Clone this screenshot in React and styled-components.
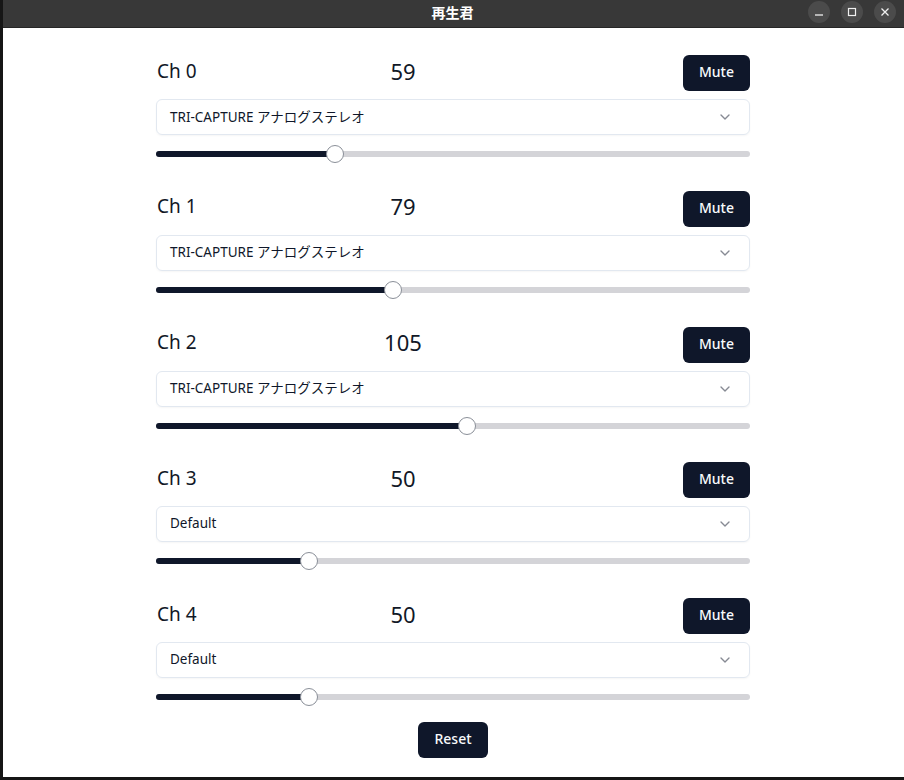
import React, { useState } from 'react'
import styled, { createGlobalStyle } from 'styled-components'
import { ChevronDown } from 'lucide-react'

const GlobalStyle = createGlobalStyle`
  html, body {
    margin: 0;
    padding: 0;
    background: #161616;
    font-family: 'Noto Sans', 'Noto Sans CJK JP', sans-serif;
  }
  * { box-sizing: border-box; }
`

const MAX = 200

const channels = [
  { name: 'Ch 0', value: 59, device: 'TRI-CAPTURE アナログステレオ' },
  { name: 'Ch 1', value: 79, device: 'TRI-CAPTURE アナログステレオ' },
  { name: 'Ch 2', value: 105, device: 'TRI-CAPTURE アナログステレオ' },
  { name: 'Ch 3', value: 50, device: 'Default' },
  { name: 'Ch 4', value: 50, device: 'Default' },
]

const Window = styled.div`
  margin-left: 3px;
  width: 901px;
  height: 777px;
  display: flex;
  flex-direction: column;
`

const TitleBar = styled.div`
  height: 28px;
  background: #383838;
  border-bottom: 1px solid #262626;
  display: flex;
  align-items: center;
  justify-content: center;
  position: relative;
`

const Title = styled.div`
  color: #ffffff;
  font-family: 'Noto Sans CJK JP', sans-serif;
  font-weight: 700;
  font-size: 14px;
  margin-left: -2px;
  margin-top: -3px;
`

const Controls = styled.div`
  position: absolute;
  right: 8px;
  top: -2px;
  height: 100%;
  display: flex;
  align-items: center;
  gap: 11px;
`

const CtlButton = styled.div`
  width: 22px;
  height: 22px;
  border-radius: 50%;
  background: #4b4b4b;
  display: flex;
  align-items: center;
  justify-content: center;
  color: #f0f0f0;
`

const Content = styled.div`
  flex: 1;
  background: #ffffff;
  margin-right: -3px;
  border-right: 3px solid #161616;
  padding: 27px 0 0 153px;
`

const Column = styled.div`
  width: 594px;
  display: flex;
  flex-direction: column;
  gap: 26.75px;
`

const Section = styled.div`
  display: flex;
  flex-direction: column;
`

const Header = styled.div`
  display: grid;
  grid-template-columns: 200px 94px 1fr auto;
  align-items: center;
  height: 36px;
`

const Label = styled.div`
  font-size: 19px;
  line-height: 1;
  color: #111827;
  padding: 0 0 4px 1px;
`

const Value = styled.div`
  font-size: 22px;
  line-height: 1;
  color: #111827;
  text-align: center;
  padding-bottom: 5px;
`

const DarkButton = styled.button`
  height: 36px;
  padding: 0 16px 3px;
  border: none;
  border-radius: 6px;
  background: #0f172a;
  color: #f8fafc;
  font-family: 'Noto Sans', sans-serif;
  font-size: 14px;
  font-weight: 500;
  cursor: pointer;
`

const Select = styled.div`
  margin-top: 8px;
  height: 36px;
  border: 1px solid #e2e8f0;
  border-radius: 6px;
  box-shadow: 0 1px 2px rgba(0, 0, 0, 0.04);
  display: flex;
  align-items: center;
  justify-content: space-between;
  padding: 0 16px 3px 13px;
  font-size: 13.5px;
  color: #0f172a;
  svg { opacity: 0.5; margin-top: 3px; }
`

const SliderWrap = styled.div`
  margin-top: 9px;
  height: 20px;
  position: relative;
  display: flex;
  align-items: center;
`

const Track = styled.div`
  width: 100%;
  height: 6px;
  border-radius: 3px;
  background: #d4d4d8;
  overflow: hidden;
`

const Fill = styled.div`
  height: 100%;
  background: #0f172a;
`

const Thumb = styled.div`
  position: absolute;
  top: 1px;
  width: 18px;
  height: 18px;
  border-radius: 50%;
  background: #ffffff;
  border: 1.5px solid #8a8f98;
`

const Footer = styled.div`
  display: flex;
  justify-content: center;
  margin-top: -11.75px;
`

function Slider({ value }) {
  const center = 9 + (value / MAX) * (594 - 18)
  return (
    <SliderWrap>
      <Track>
        <Fill style={{ width: center }} />
      </Track>
      <Thumb style={{ left: center - 9 }} />
    </SliderWrap>
  )
}

export default function App() {
  const [items] = useState(channels)
  return (
    <>
      <GlobalStyle />
      <Window>
        <TitleBar>
          <Title>再生君</Title>
          <Controls>
            <CtlButton>
              <svg width='10' height='10' viewBox='0 0 10 10'>
                <line x1='1' y1='8' x2='9' y2='8' stroke='currentColor' strokeWidth='1.3' />
              </svg>
            </CtlButton>
            <CtlButton>
              <svg width='10' height='10' viewBox='0 0 10 10'>
                <rect x='1.5' y='1.5' width='7' height='7' fill='none' stroke='currentColor' strokeWidth='1.2' />
              </svg>
            </CtlButton>
            <CtlButton>
              <svg width='10' height='10' viewBox='0 0 10 10'>
                <path d='M1.5 1.5 L8.5 8.5 M8.5 1.5 L1.5 8.5' stroke='currentColor' strokeWidth='1.3' />
              </svg>
            </CtlButton>
          </Controls>
        </TitleBar>
        <Content>
          <Column>
            {items.map((ch) => (
              <Section key={ch.name}>
                <Header>
                  <Label>{ch.name}</Label>
                  <Value>{ch.value}</Value>
                  <div />
                  <DarkButton>Mute</DarkButton>
                </Header>
                <Select>
                  <span>{ch.device}</span>
                  <ChevronDown size={16} />
                </Select>
                <Slider value={ch.value} />
              </Section>
            ))}
            <Footer>
              <DarkButton>Reset</DarkButton>
            </Footer>
          </Column>
        </Content>
      </Window>
    </>
  )
}
